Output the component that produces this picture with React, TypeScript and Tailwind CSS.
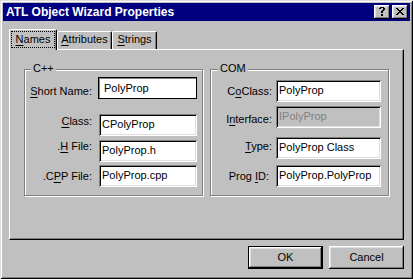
import React from "react";

const raised =
  "shadow-[inset_-1px_-1px_0_#000,inset_1px_1px_0_#fff,inset_-2px_-2px_0_#808080,inset_2px_2px_0_#dfdfdf]";
const sunken =
  "shadow-[inset_1px_1px_0_#808080,inset_-1px_-1px_0_#fff,inset_2px_2px_0_#000,inset_-2px_-2px_0_#dfdfdf]";

function Bitmap({ rows }: { rows: string[] }) {
  const w = rows[0].length;
  const h = rows.length;
  return (
    <svg width={w} height={h} viewBox={`0 0 ${w} ${h}`} shapeRendering="crispEdges">
      {rows.flatMap((r, y) =>
        r.split("").map((c, x) =>
          c === "X" ? <rect key={`${x}-${y}`} x={x} y={y} width={1} height={1} fill="#000" /> : null
        )
      )}
    </svg>
  );
}

const HELP = [
  ".XXXX.",
  "XX..XX",
  "....XX",
  "...XX.",
  "..XX..",
  "..XX..",
  "......",
  "..XX..",
  "..XX..",
];
const CLOSE = [
  "XX....XX",
  ".XX..XX.",
  "..XXXX..",
  "...XX...",
  "..XXXX..",
  ".XX..XX.",
  "XX....XX",
];

function U({ children }: { children: React.ReactNode }) {
  return <span className="underline decoration-1 underline-offset-[2px]">{children}</span>;
}

function Field({
  value,
  className,
}: {
  value: string;
  className: string;
}) {
  return <div className={`h-[22px] whitespace-nowrap leading-[13px] ${className}`}>{value}</div>;
}

export default function App() {
  return (
    <div className="w-[413px] h-[279px] bg-[#c0c0c0] p-[3px] flex flex-col shadow-[inset_1px_1px_0_#dfdfdf,inset_-1px_-1px_0_#000,inset_2px_2px_0_#fff,inset_-2px_-2px_0_#808080] text-[11px] leading-[13px] text-black font-['Liberation_Sans',Arial,sans-serif] select-none">
      {/* Title bar */}
      <div className="h-[18px] bg-[#000080] flex items-center pl-[3px] pr-[2px]">
        <span className="text-white font-bold text-[12px] leading-[14px] whitespace-nowrap">
          ATL Object Wizard Properties
        </span>
        <div className="ml-auto flex gap-[2px]">
          <div className={`w-[16px] h-[14px] bg-[#c0c0c0] ${raised} flex items-start justify-center pt-[2px]`}>
            <Bitmap rows={HELP} />
          </div>
          <div className={`w-[16px] h-[14px] bg-[#c0c0c0] ${raised} flex items-start pl-[4px] pt-[3px]`}>
            <Bitmap rows={CLOSE} />
          </div>
        </div>
      </div>

      {/* Body */}
      <div className="flex flex-col px-[6px]">
        {/* Tabs */}
        <div className="mt-[8px] h-[20px] flex">
          <div className="relative z-10 self-start h-[21px] w-[48px] bg-[#c0c0c0] border-l border-t border-r border-white border-r-black rounded-t-[2px] shadow-[inset_-1px_0_0_#808080] pl-[1px] pr-[1px] pt-[1px]">
            <div className="h-[17px] border border-dotted border-black flex items-center justify-center">
              <span>
                <U>N</U>ames
              </span>
            </div>
          </div>
          <div className="self-end h-[18px] w-[55px] border-l border-t border-r border-white border-r-black rounded-t-[2px] shadow-[inset_-1px_0_0_#808080] pt-[1px] text-center">
            <U>A</U>ttributes
          </div>
          <div className="self-end h-[18px] w-[45px] border-l border-t border-r border-white border-r-black rounded-t-[2px] shadow-[inset_-1px_0_0_#808080] pt-[1px] text-center">
            <U>S</U>trings
          </div>
        </div>

        {/* Panel */}
        <div className="h-[191px] border-l border-t border-white border-r border-b border-r-black border-b-black shadow-[inset_-1px_-1px_0_#808080] pl-[14px] pt-[19px] flex gap-[7px]">
          {/* C++ group */}
          <div className="relative w-[179px] h-[127px] border border-[#808080] shadow-[1px_1px_0_#fff,inset_1px_1px_0_#fff] flex flex-col">
            <span className="absolute left-[6px] top-[-8px] px-[2px] bg-[#c0c0c0]">C++</span>
            <div className="flex items-start h-[37px] mt-[7px]">
              <div className="w-[67px] text-right whitespace-nowrap mt-[8px]">
                <U>S</U>hort Name:
              </div>
              <Field
                value="PolyProp"
                className="ml-[6px] w-[99px] bg-white pl-[6px] pt-[5px] shadow-[inset_0_0_0_1px_#000,inset_2px_2px_0_#808080,inset_-2px_-2px_0_#fff]"
              />
            </div>
            <div className="flex items-start h-[26px]">
              <div className="w-[67px] text-right whitespace-nowrap mt-[1px]">
                <U>C</U>lass:
              </div>
              <Field value="CPolyProp" className={`ml-[7px] w-[98px] bg-white pl-[3px] pt-[4px] ${sunken}`} />
            </div>
            <div className="flex items-start h-[25px]">
              <div className="w-[67px] text-right whitespace-nowrap mt-0">
                .<U>H</U> File:
              </div>
              <Field value="PolyProp.h" className={`ml-[7px] w-[98px] bg-white pl-[3px] pt-[4px] ${sunken}`} />
            </div>
            <div className="flex items-start h-[22px]">
              <div className="w-[67px] text-right whitespace-nowrap mt-[5px]">
                .C<U>P</U>P File:
              </div>
              <Field value="PolyProp.cpp" className={`ml-[7px] w-[98px] bg-white pl-[3px] pt-[4px] ${sunken}`} />
            </div>
          </div>

          {/* COM group */}
          <div className="relative w-[179px] h-[127px] border border-[#808080] shadow-[1px_1px_0_#fff,inset_1px_1px_0_#fff] flex flex-col">
            <span className="absolute left-[7px] top-[-8px] px-[2px] bg-[#c0c0c0]">COM</span>
            <div className="flex items-start h-[26px] mt-[10px]">
              <div className="w-[61px] text-right whitespace-nowrap mt-[5px]">
                C<U>o</U>Class:
              </div>
              <Field value="PolyProp" className={`ml-[4px] w-[105px] bg-white pl-[3px] pt-[4px] ${sunken}`} />
            </div>
            <div className="flex items-start h-[31px]">
              <div className="w-[61px] text-right whitespace-nowrap mt-[7px]">
                I<U>n</U>terface:
              </div>
              <Field
                value="IPolyProp"
                className={`ml-[4px] w-[105px] bg-[#c0c0c0] text-[#808080] pl-[3px] pt-[4px] ${sunken}`}
              />
            </div>
            <div className="flex items-start h-[28px]">
              <div className="w-[61px] text-right whitespace-nowrap mt-[3px]">
                <U>T</U>ype:
              </div>
              <Field value="PolyProp Class" className={`ml-[4px] w-[105px] bg-white pl-[3px] pt-[4px] ${sunken}`} />
            </div>
            <div className="flex items-start h-[22px]">
              <div className="w-[61px] text-right whitespace-nowrap mt-[5px] pr-[3px]">
                Prog <U>I</U>D:
              </div>
              <Field
                value="PolyProp.PolyProp"
                className={`ml-[4px] w-[105px] bg-white pl-[3px] pt-[4px] ${sunken}`}
              />
            </div>
          </div>
        </div>

        {/* Buttons */}
        <div className="mt-[6px] flex justify-end gap-[6px]">
          <div className="w-[75px] h-[23px] border border-black">
            <div className={`w-full h-full ${raised} flex items-center justify-center`}>OK</div>
          </div>
          <div className={`w-[75px] h-[23px] ${raised} flex items-center justify-center`}>Cancel</div>
        </div>
      </div>
    </div>
  );
}
